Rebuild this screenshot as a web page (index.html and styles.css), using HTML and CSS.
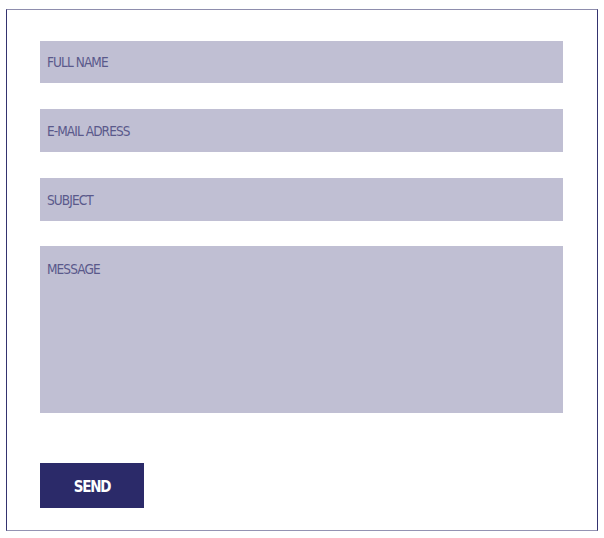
FILE: index.html
```html
<!DOCTYPE html>
<html>
<head>
    <title>Contact</title>
    <meta name="viewport" content="width=device-width, initial-scale=1">
    <link rel="stylesheet" href="styles.css">
</head>
<body>
    <div class="contact-box">
        <form id="contactForm" class="contact-form">
            <input type="text" class="field field-short" placeholder="FULL NAME" name="name">
            <input type="email" class="field" placeholder="E-MAIL ADRESS" name="email">
            <input type="text" class="field" placeholder="SUBJECT" name="subject">
            <textarea class="field field-message" placeholder="MESSAGE" name="message"></textarea>
            <button type="submit" class="send-button">SEND</button>
        </form>
    </div>
</body>
</html>
```

FILE: styles.css
```css
body {
    margin: 0;
    padding: 9px 6px 7px 6px;
    background-color: #ffffff;
    font-family: "DejaVu Sans Condensed", "Liberation Sans", sans-serif;
}
.contact-box {
    border: 1px solid #34336f;
    border-top-color: #8e8dad;
    border-bottom-color: #9493b3;
    height: 522px;
    box-sizing: border-box;
    padding: 31px 34px 0 33px;
}
.contact-form {
    display: flex;
    flex-direction: column;
    align-items: flex-start;
}
.field {
    width: 100%;
    height: 43px;
    margin: 0 0 26px 0;
    padding: 0 7px;
    box-sizing: border-box;
    border: none;
    background-color: #c0bfd3;
    color: #58578a;
    font-family: inherit;
    font-size: 13.5px;
    letter-spacing: -0.9px;
    outline: none;
}
.field-short {
    height: 42px;
}
.field::placeholder {
    color: #5a598b;
}
.field-message {
    height: 167px;
    margin: -1px 0 50px 0;
    padding-top: 15px;
    resize: none;
}
.send-button {
    background-color: #2b2a69;
    border: none;
    color: white;
    width: 104px;
    height: 45px;
    padding: 2px 0 0 0;
    font-family: inherit;
    font-size: 15px;
    font-weight: bold;
    letter-spacing: -1.2px;
    cursor: pointer;
}
```
